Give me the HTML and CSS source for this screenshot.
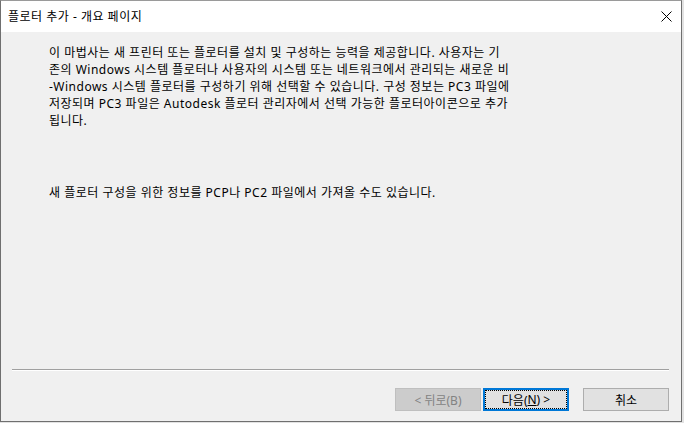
FILE: index.html
```html
<!DOCTYPE html>
<html lang="ko">
<head>
<meta charset="utf-8">
<link rel="stylesheet" href="styles.css">
</head>
<body>
<div class="window">
  <div class="titlebar">
    <span class="title">플로터 추가 - 개요 페이지</span>
    <span class="close">
      <svg width="11" height="11" viewBox="0 0 11 11"><path d="M0.5 0.5 L10.5 10.5 M10.5 0.5 L0.5 10.5" stroke="#000" stroke-width="1" fill="none"/></svg>
    </span>
  </div>
  <div class="content">
    <div class="body">
      <p class="para">이 마법사는 새 프린터 또는 플로터를 설치 및 구성하는 능력을 제공합니다. 사용자는 기<br>존의 Windows 시스템 플로터나 사용자의 시스템 또는 네트워크에서 관리되는 새로운 비<br>-Windows 시스템 플로터를 구성하기 위해 선택할 수 있습니다. 구성 정보는 PC3 파일에<br>저장되며 PC3 파일은 Autodesk 플로터 관리자에서 선택 가능한 플로터아이콘으로 추가<br>됩니다.</p>
      <p class="para para2">새 플로터 구성을 위한 정보를 PCP나 PC2 파일에서 가져올 수도 있습니다.</p>
    </div>
    <div class="footer">
      <div class="sep"></div>
      <div class="buttons">
        <div class="btn btn-disabled">&lt; 뒤로(B)</div>
        <div class="btn btn-default">다음(<u>N</u>) &gt;</div>
        <div class="btn btn-cancel">취소</div>
      </div>
    </div>
  </div>
</div>
</body>
</html>
```

FILE: styles.css
```css
html, body {
  margin: 0;
  padding: 0;
}
body {
  width: 684px;
  height: 423px;
  background: #e2e2e2;
  font-family: "Noto Sans", "Noto Sans CJK KR", sans-serif;
  font-size: 12px;
  color: #000;
  overflow: hidden;
}
.window {
  width: 682px;
  height: 422px;
  box-sizing: border-box;
  border: 1px solid #6f6f6f;
  border-top-color: #9a9a9a;
  display: flex;
  flex-direction: column;
  background: #f0f0f0;
}
.titlebar {
  height: 31px;
  background: #fff;
  display: flex;
  align-items: center;
  justify-content: space-between;
  padding-left: 7px;
  flex-shrink: 0;
}
.title {
  font-size: 12px;
  line-height: 16px;
  letter-spacing: 0.5px;
}
.close {
  width: 30px;
  height: 31px;
  display: flex;
  align-items: center;
  justify-content: center;
}
.content {
  flex: 1;
  display: flex;
  flex-direction: column;
}
.body {
  padding: 12px 0 0 48px;
}
.para {
  margin: 0;
  line-height: 17px;
  white-space: nowrap;
  letter-spacing: 0.5px;
}
.para2 {
  margin-top: 55px;
}
.footer {
  margin-top: auto;
  padding-bottom: 10px;
}
.sep {
  margin: 0 12px 0 11px;
  height: 1px;
  background: #a0a0a0;
  border-bottom: 1px solid #fff;
}
.buttons {
  display: flex;
  justify-content: flex-end;
  padding-right: 12px;
  margin-top: 17px;
}
.btn {
  width: 86px;
  height: 23px;
  box-sizing: border-box;
  display: flex;
  align-items: center;
  justify-content: center;
  font-size: 12px;
  background: #e1e1e1;
  border: 1px solid #adadad;
  position: relative;
}
.btn-disabled {
  background: #cccccc;
  border-color: #bfbfbf;
  color: #838383;
}
.btn-default {
  margin-left: 2px;
  border: 2px solid #0078d7;
}
.btn-default::after {
  content: "";
  position: absolute;
  inset: 0;
  border: 1px dotted #000;
}
.btn-cancel {
  margin-left: 14px;
}
```
